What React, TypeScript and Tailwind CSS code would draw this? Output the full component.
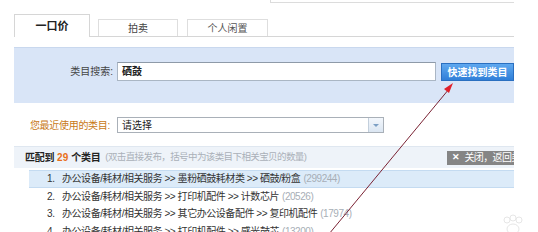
import React from "react";

const rows = [
  { n: 1, path: "办公设备/耗材/相关服务 >> 墨粉硒鼓耗材类 >> 硒鼓/粉盒", count: "299244", on: true },
  { n: 2, path: "办公设备/耗材/相关服务 >> 打印机配件 >> 计数芯片", count: "20526" },
  { n: 3, path: "办公设备/耗材/相关服务 >> 其它办公设备配件 >> 复印机配件", count: "17974" },
  { n: 4, path: "办公设备/耗材/相关服务 >> 打印机配件 >> 感光鼓芯", count: "13200" },
];

export default function App() {
  return (
    <div
      className="relative w-[538px] h-[232px] overflow-hidden bg-white text-[10px] text-[#333]"
      style={{ fontFamily: '"Liberation Sans", "Noto Sans CJK SC", sans-serif' }}
    >
      <div className="pl-[14px] pr-[24px]">
        {/* top strip */}
        <div className="flex h-[14px]">
          <div className="ml-auto w-[244px] h-[3px] border-l border-b border-[#dcdcdc]" />
        </div>

        {/* tabs */}
        <div className="flex items-end h-[23px] border-b border-[#d6d6d6]">
          <div className="w-[76px] h-[23px] -mb-px bg-white border-t border-l border-r border-[#d6d6d6] flex items-center justify-center font-bold text-[11px] text-[#222]">
            一口价
          </div>
          <div className="ml-[8px] w-[80px] h-[17px] border-t border-l border-r border-[#dedede] flex items-center justify-center text-[#444]">
            拍卖
          </div>
          <div className="ml-[9px] w-[81px] h-[17px] border-t border-l border-r border-[#dedede] flex items-center justify-center text-[#555]">
            个人闲置
          </div>
        </div>

        {/* search panel */}
        <div className="mt-[10px] h-[56px] bg-[#d9e5f7] border-t border-[#c9d8ee] flex items-start pt-[14px]">
          <div className="w-[99px] h-[19px] flex items-center justify-end text-[#444]">类目搜索:</div>
          <div className="ml-[4px] w-[319px] h-[19px] bg-white border border-[#aab6c4] border-t-[#8e9aa8] flex items-center pl-[4px] font-bold text-[#222]">
            硒鼓
          </div>
          <div className="ml-[5px] mt-[1px] w-[73px] h-[18px] bg-gradient-to-b from-[#5fa8ef] to-[#2f7fd8] border border-[#2a6fc0] flex items-center justify-center font-bold text-white">
            快速找到类目
          </div>
        </div>

        {/* recent */}
        <div className="mt-[14px] flex items-center h-[16px]">
          <div className="w-[96px] flex justify-end text-[#c87816] tracking-[-0.3px]">您最近使用的类目:</div>
          <div className="ml-[7px] w-[267px] h-[16px] border border-[#a9b0b8] bg-white flex">
            <div className="flex-1 pl-[4px] flex items-center text-[#222]">请选择</div>
            <div className="w-[15px] border-l border-[#c3cfdc] bg-gradient-to-b from-[#f3f7fc] to-[#dbe6f2] flex items-center justify-center">
              <div className="w-0 h-0 border-l-[3px] border-r-[3px] border-t-[3px] border-l-transparent border-r-transparent border-t-[#7c9fc4]" />
            </div>
          </div>
        </div>

        {/* result header */}
        <div className="mt-[13px] h-[22px] bg-[#eef3f9] border-t border-[#dfe7f0] flex items-center pl-[11px] overflow-hidden">
          <span className="font-bold text-[#222] tracking-[-0.3px]">匹配到</span>
          <span className="ml-[3px] font-bold text-[#e8701a]">29</span>
          <span className="ml-[3px] font-bold text-[#222] tracking-[-0.3px]">个类目</span>
          <span className="ml-[5px] text-[9.5px] text-[#aab0b8] whitespace-nowrap tracking-[-0.6px]">(双击直接发布，括号中为该类目下相关宝贝的数量)</span>
          <div className="ml-auto shrink-0 h-[14px] w-[67px] bg-[#858585] text-white flex items-center pl-[5px] whitespace-nowrap overflow-hidden tracking-[-0.6px]">
            <span className="font-bold mr-[5px] text-[9px]">✕</span>关闭，返回类目
          </div>
        </div>

        {/* list */}
        <div className="ml-[15px] mt-[2px]">
          {rows.map((r) => (
            <div
              key={r.n}
              className={`h-[17.5px] flex items-center pl-[18px] whitespace-nowrap tracking-[-0.45px] ${
                r.on ? "bg-[#dcebf9] border-y border-[#c4dbf1]" : ""
              }`}
            >
              <span className="w-[15px]">{r.n}.</span>
              <span>{r.path}</span>
              <span className="ml-[3px] text-[#a7aeb6]">({r.count})</span>
            </div>
          ))}
        </div>
      </div>

      {/* watermark */}
      <svg className="absolute left-[498px] top-[214px]" width="30" height="22" viewBox="0 0 30 22">
        <g fill="none" stroke="#e6e6e6" strokeWidth="1">
          <circle cx="9" cy="6" r="3" />
          <circle cx="15" cy="4" r="3" />
          <circle cx="21" cy="6" r="3" />
          <ellipse cx="15" cy="15" rx="6" ry="5" />
        </g>
      </svg>

      {/* arrow */}
      <svg className="absolute left-0 top-0 pointer-events-none" width="538" height="232">
        <line x1="329" y1="234" x2="449" y2="89" stroke="#7a2233" strokeWidth="1" />
        <polygon points="453,83 444,89 449,93" fill="#e0202a" />
      </svg>
    </div>
  );
}
